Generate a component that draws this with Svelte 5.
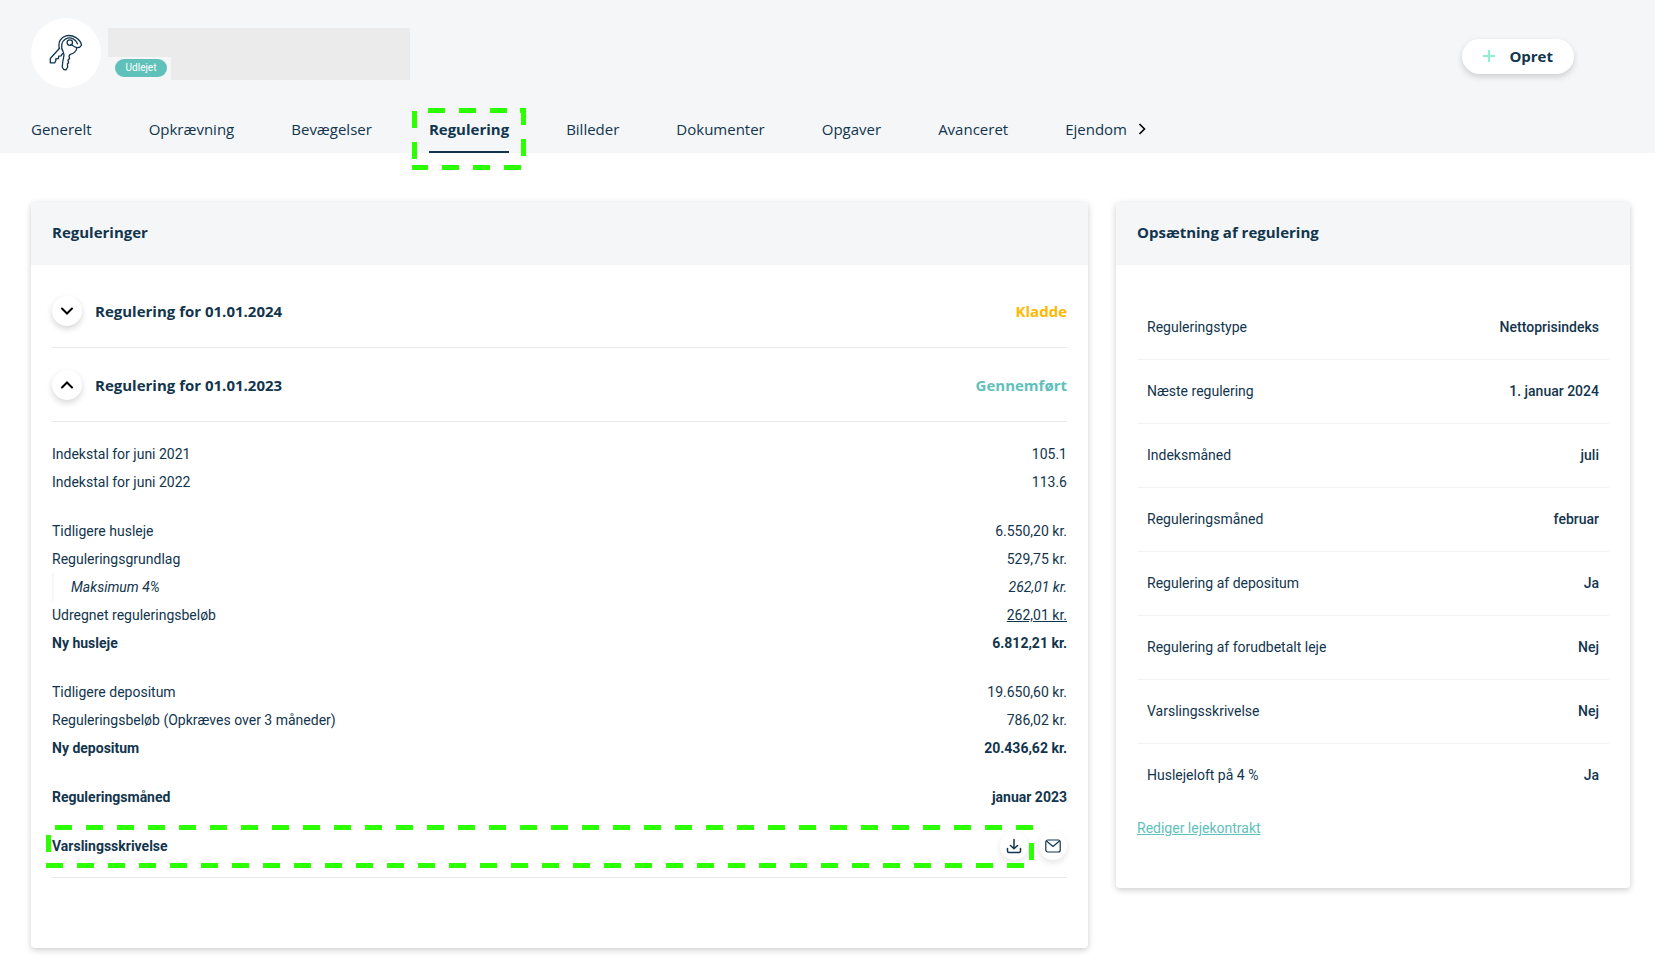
<script>
  const tabs = ['Generelt', 'Opkrævning', 'Bevægelser', 'Regulering', 'Billeder', 'Dokumenter', 'Opgaver', 'Avanceret', 'Ejendom'];
  const current = 'Regulering';

  const groups = [
    [
      { label: 'Indekstal for juni 2021', value: '105.1' },
      { label: 'Indekstal for juni 2022', value: '113.6' }
    ],
    [
      { label: 'Tidligere husleje', value: '6.550,20 kr.' },
      { label: 'Reguleringsgrundlag', value: '529,75 kr.' },
      { label: 'Maksimum 4%', value: '262,01 kr.', kind: 'limit' },
      { label: 'Udregnet reguleringsbeløb', value: '262,01 kr.', kind: 'sum' },
      { label: 'Ny husleje', value: '6.812,21 kr.', kind: 'total' }
    ],
    [
      { label: 'Tidligere depositum', value: '19.650,60 kr.' },
      { label: 'Reguleringsbeløb (Opkræves over 3 måneder)', value: '786,02 kr.' },
      { label: 'Ny depositum', value: '20.436,62 kr.', kind: 'total' }
    ],
    [{ label: 'Reguleringsmåned', value: 'januar 2023', kind: 'total' }]
  ];

  const settings = [
    ['Reguleringstype', 'Nettoprisindeks'],
    ['Næste regulering', '1. januar 2024'],
    ['Indeksmåned', 'juli'],
    ['Reguleringsmåned', 'februar'],
    ['Regulering af depositum', 'Ja'],
    ['Regulering af forudbetalt leje', 'Nej'],
    ['Varslingsskrivelse', 'Nej'],
    ['Huslejeloft på 4 %', 'Ja']
  ];
</script>

<header class="top">
  <div class="identity">
    <div class="avatar">
      <svg width="34" height="38" viewBox="0 0 34 38" fill="none" stroke="#12354d" stroke-width="1.3" stroke-linejoin="round" stroke-linecap="round" aria-hidden="true">
        <path d="M10.300 14.500C8.800 8 12 3 17 1.800c7-1.500 14.500 3.200 15.500 9.400-1 2-3 2.700-5.500 2.200-2-.4-3.500-1.800-5-3" />
        <path d="M14.300 18c-3-4.500-2-10.500 2.500-13.200 4.500-2.300 10 .2 11.700 5M27.700 13.700c.2 3-2.700 6-6.500 6.600l-1.200 1.900.6 2.300-1.700 1.700.8 2.300-1.300 1.500.3 3-1.700 2.800-2.300-.3-1.500-2.500.6-5.500c.4-3.300 2.200-6.500.5-9.500" />
        <circle cx="20.800" cy="8.600" r="2.700" />
        <path d="M10.300 14.500 1.300 24.500v4.300h4.500l1.200-2.500-.3-1.500 2.800-.3.200-2.300 2.300-.3 1.500-2.300" />
      </svg>
    </div>
    <div class="name">
      <div class="name-bar"></div>
      <div class="name-row">
        <span class="badge">Udlejet</span>
        <div class="name-fill"></div>
      </div>
    </div>
  </div>
  <button class="create" type="button">
    <svg width="12" height="12" viewBox="0 0 12 12" stroke="#8df0d3" stroke-width="2" aria-hidden="true"><path d="M6 0v12M0 6h12" /></svg>
    Opret
  </button>
  <nav class="tabs">
    {#each tabs as tab}
      <a href="#{tab}" class:active={tab === current} aria-current={tab === current ? 'page' : undefined}>
        {tab}
        {#if tab === current}
          <svg class="mark" width="114" height="62" viewBox="0 0 114 62" fill="none" stroke="#2bff00" stroke-width="5" aria-hidden="true">
            <path d="M16 2.500h92" stroke-dasharray="17 14" />
            <path d="M111.500 0v48" stroke-dasharray="17 14" />
            <path d="M108 2.500h6" />
            <path d="M0 59.500h109" stroke-dasharray="17 14" stroke-dashoffset="1" />
            <path d="M2.500 3v48" stroke-dasharray="17 14" />
          </svg>
        {/if}
      </a>
    {/each}
    <button class="more" type="button" aria-label="Flere">
      <svg width="8" height="12" viewBox="0 0 8 12" fill="none" stroke="#000" stroke-width="1.600" aria-hidden="true"><path d="M1.500 1 6.500 6l-5 5" /></svg>
    </button>
  </nav>
</header>

<main>
  <section class="card wide">
    <h2>Reguleringer</h2>
    <div class="body">
      <div class="entry">
        <button class="round" type="button" aria-label="Vis" aria-expanded="false">
          <svg width="14" height="10" viewBox="0 0 14 10" fill="none" stroke="#000" stroke-width="2" stroke-linecap="round" aria-hidden="true"><path d="m2 2.500 5 5 5-5" /></svg>
        </button>
        <h3>Regulering for 01.01.2024</h3>
        <span class="status draft">Kladde</span>
      </div>
      <div class="entry">
        <button class="round" type="button" aria-label="Skjul" aria-expanded="true">
          <svg width="14" height="10" viewBox="0 0 14 10" fill="none" stroke="#000" stroke-width="2" stroke-linecap="round" aria-hidden="true"><path d="m2 7.500 5-5 5 5" /></svg>
        </button>
        <h3>Regulering for 01.01.2023</h3>
        <span class="status done">Gennemført</span>
      </div>
      <div class="details">
        {#each groups as group}
          <dl>
            {#each group as row}
              <div class="line {row.kind ?? ''}">
                <dt>{row.label}</dt>
                <dd>{row.value}</dd>
              </div>
            {/each}
          </dl>
        {/each}
        <div class="letter">
          <span>Varslingsskrivelse</span>
          <button class="round small" type="button" aria-label="Hent">
            <svg width="16" height="16" viewBox="0 0 16 16" fill="none" stroke="#12354d" stroke-width="1.500" stroke-linecap="round" stroke-linejoin="round" aria-hidden="true"><path d="M8 1.500v9M4.500 7.500 8 10.800l3.500-3.300M1.500 10.500v2.500a1.500 1.500 0 0 0 1.500 1.500h10a1.500 1.500 0 0 0 1.500-1.500v-2.500" /></svg>
          </button>
          <button class="round small" type="button" aria-label="Send">
            <svg width="16" height="14" viewBox="0 0 16 14" fill="none" stroke="#12354d" stroke-width="1.200" stroke-linejoin="round" aria-hidden="true"><rect x=".8" y="1" width="14.400" height="12" rx="2" /><path d="m1.500 2 6.500 5.500L14.500 2" /></svg>
          </button>
          <div class="frame" aria-hidden="true"><i class="t"></i><i class="b"></i><i class="l"></i><i class="r"></i></div>
        </div>
      </div>
    </div>
  </section>

  <section class="card side">
    <h2>Opsætning af regulering</h2>
    <div class="body">
      <dl class="settings">
        {#each settings as [label, value]}
          <div><dt>{label}</dt><dd>{value}</dd></div>
        {/each}
      </dl>
      <a class="edit" href="#kontrakt">Rediger lejekontrakt</a>
    </div>
  </section>
</main>

<style>
  :global(body) {
    background: #fff;
    color: #12354d;
    font-family: Roboto, sans-serif;
    font-size: 14px;
    line-height: 28px;
  }
  h2, h3, dl, dd { margin: 0; }
  button {
    border: 0;
    padding: 0;
    background: #fff;
    color: inherit;
    cursor: pointer;
  }
  svg { display: block; flex: none; }

  .top {
    display: flex;
    flex-wrap: wrap;
    justify-content: space-between;
    padding: 18px 81px 0 31px;
    background: #f4f6f8;
  }
  .identity { display: flex; gap: 7px; }
  .avatar {
    display: grid;
    place-items: center;
    width: 70px;
    height: 70px;
    border-radius: 50%;
    background: #fff;
  }
  .name { width: 302px; padding-top: 10px; }
  .name-bar { height: 29px; background: #ebebeb; }
  .name-row { display: flex; justify-content: space-between; }
  .badge {
    margin: 2px 0 0 7px;
    width: 52px;
    height: 18px;
    border-radius: 9px;
    background: #60c1ba;
    color: #fff;
    font-size: 10px;
    line-height: 18px;
    text-align: center;
  }
  .name-fill { width: 239px; height: 23px; background: #ebebeb; }
  .create {
    display: flex;
    align-items: center;
    gap: 14px;
    height: 35px;
    margin-top: 21px;
    padding: 0 21px 2px;
    border-radius: 18px;
    box-shadow: 0 3px 6px rgba(0, 0, 0, .16);
    font: 700 15px "Open Sans", sans-serif;
  }
  .tabs {
    display: flex;
    width: 100%;
    margin-top: 18px;
    gap: 57px;
    font: 15px/24px "Open Sans", sans-serif;
  }
  .tabs a {
    position: relative;
    height: 34px;
    padding-top: 11px;
    color: inherit;
    text-decoration: none;
    border-bottom: 2px solid transparent;
  }
  .tabs a.active { font-weight: 700; border-color: #12354d; }
  .mark { position: absolute; left: -17px; top: 2px; }
  .more { display: grid; place-items: center; height: 24px; margin: 11px 0 0 -46px; background: none; }

  main {
    display: flex;
    align-items: flex-start;
    gap: 28px;
    padding: 49px 25px 25px 31px;
  }
  .card {
    border-radius: 4px;
    background: #fff;
    box-shadow: 0 2px 6px rgba(0, 0, 0, .2);
  }
  .wide { flex: 1057 1 0; }
  .side { flex: 514 1 0; }
  h2 {
    padding: 0 21px 2px;
    border-radius: 4px 4px 0 0;
    background: #f4f6f8;
    font: 700 15px/61px "Open Sans", sans-serif;
  }
  .wide .body { padding: 9px 21px 70px; }
  .entry {
    display: flex;
    align-items: center;
    gap: 13px;
    height: 73px;
    border-bottom: 1px solid #e6e8ea;
  }
  .round {
    display: grid;
    place-items: center;
    width: 30px;
    height: 30px;
    border-radius: 50%;
    box-shadow: 0 3px 6px rgba(0, 0, 0, .16);
  }
  h3, .status { font: 700 15px "Open Sans", sans-serif; }
  .status { margin-left: auto; }
  .draft { color: #ffb800; }
  .done { color: #60c1ba; }
  .details {
    display: grid;
    gap: 21px;
    padding: 18px 0 17px;
    border-bottom: 1px solid #e6e8ea;
  }
  .line { display: flex; justify-content: space-between; }
  .limit { padding-left: 17px; border-left: 2px solid #f4f6f8; font-style: italic; }
  .sum dd { text-decoration: underline; }
  .total { font-weight: 700; }
  .letter {
    position: relative;
    display: flex;
    align-items: center;
    gap: 11px;
    height: 28px;
    font-weight: 700;
  }
  .letter span { margin-right: auto; }
  .small {
    width: 28px;
    height: 28px;
    box-shadow: 0 3px 6px rgba(0, 0, 0, .1);
  }
  .frame { position: absolute; inset: -7px 33px -8px -6px; pointer-events: none; }
  .frame i { position: absolute; background: #2bff00; }
  .frame .t, .frame .b {
    height: 5px;
    background: repeating-linear-gradient(90deg, #2bff00 0 17px, transparent 17px 31px);
  }
  .frame .t { top: 0; left: 9px; right: 0; }
  .frame .b { bottom: 0; left: 0; right: 0; }
  .frame .l { left: 0; top: 10px; width: 5px; height: 17px; }
  .frame .r { right: 0; bottom: 8px; width: 5px; height: 17px; }

  .side .body { padding: 31px 21px 46px; }
  .settings > div {
    display: flex;
    justify-content: space-between;
    padding: 17px 10px 18px;
    border-bottom: 1px solid #f1f3f5;
  }
  .settings > div:last-child { border: 0; }
  .settings dd { font-weight: 500; }
  .edit { display: block; color: #60c1ba; margin-top: 7px; }
</style>
